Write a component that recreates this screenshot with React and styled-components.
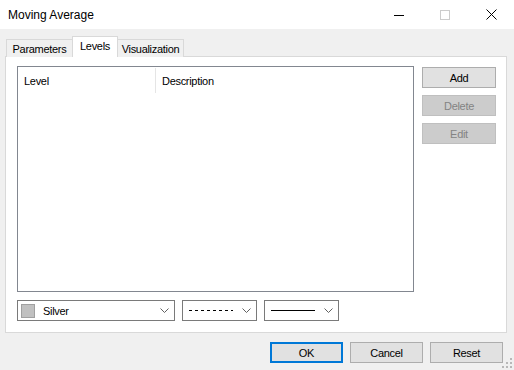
import React from "react";
import styled, { createGlobalStyle, css } from "styled-components";

const GlobalStyle = createGlobalStyle`
  html, body {
    margin: 0;
    padding: 0;
    background: #f0f0f0;
  }
  body {
    font-family: "Segoe UI", Tahoma, "Liberation Sans", Arial, sans-serif;
    font-size: 11px;
    letter-spacing: -0.3px;
    color: #000;
  }
`;

// Window frame
const Window = styled.div`
  position: relative;
  width: 514px;
  height: 370px;
  display: flex;
  flex-direction: column;
  background: #f0f0f0;
  overflow: hidden;
`;

const TitleBar = styled.div`
  height: 29px;
  display: flex;
  align-items: center;
  background: #fff;
  flex-shrink: 0;
`;

const Title = styled.div`
  flex: 1;
  padding-left: 8px;
  font-size: 12px;
  letter-spacing: 0;
  color: #000;
`;

const CaptionButton = styled.div`
  width: 46px;
  height: 29px;
  display: flex;
  align-items: center;
  justify-content: center;
`;

const Body = styled.div`
  flex: 1;
  display: flex;
  flex-direction: column;
  padding: 7px 7px 0 5px;
`;

// Tabs
const TabStrip = styled.div`
  display: flex;
  align-items: flex-end;
  height: 21px;
  padding-left: 2px;
  position: relative;
  z-index: 1;
  margin-bottom: -1px;
`;

const Tab = styled.div`
  width: ${({ $width }) => $width}px;
  height: 18px;
  display: flex;
  align-items: center;
  justify-content: center;
  border: 1px solid #d9d9d9;
  border-bottom: none;
  background: #f0f0f0;
  margin-left: -1px;
  box-sizing: border-box;
  ${({ $active }) =>
    $active &&
    css`
      height: 21px;
      background: #fff;
      padding-bottom: 3px;
      position: relative;
      z-index: 2;
    `}
`;

const Panel = styled.div`
  height: 277px;
  box-sizing: border-box;
  border: 1px solid #d9d9d9;
  background: #fff;
  padding: 9px 11px 0 11px;
  display: flex;
  flex-direction: column;
`;

const TopRow = styled.div`
  display: flex;
  gap: 8px;
`;

const ListBox = styled.div`
  width: 398px;
  height: 226px;
  box-sizing: border-box;
  border: 1px solid #828790;
  background: #fff;
`;

const HeaderRow = styled.div`
  display: flex;
  height: 25px;
  margin-top: 1px;
`;

const HeaderCell = styled.div`
  width: ${({ $width }) => $width}px;
  box-sizing: border-box;
  padding-left: 6px;
  display: flex;
  align-items: center;
  border-right: 1px solid ${({ $divider }) => ($divider ? "#e5e5e5" : "transparent")};
`;

const ButtonColumn = styled.div`
  display: flex;
  flex-direction: column;
  gap: 7px;
  padding-top: 1px;
`;

const Button = styled.button`
  width: ${({ $width }) => $width || 74}px;
  height: 21px;
  box-sizing: border-box;
  font-family: inherit;
  font-size: 11px;
  letter-spacing: inherit;
  color: #000;
  background: #e1e1e1;
  border: 1px solid #adadad;
  padding: 0;
  margin: 0;
  ${({ disabled }) =>
    disabled &&
    css`
      background: #cccccc;
      border-color: #bfbfbf;
      color: #838383;
    `}
  ${({ $default }) =>
    $default &&
    css`
      border: 2px solid #0078d7;
    `}
`;

// Combo boxes
const ComboRow = styled.div`
  display: flex;
  gap: 7px;
  margin-top: 8px;
`;

const Combo = styled.div`
  width: ${({ $width }) => $width}px;
  height: 21px;
  box-sizing: border-box;
  border: 1px solid #7a7a7a;
  background: #fff;
  display: flex;
  align-items: center;
  padding: 0 5px 0 3px;
`;

const ComboValue = styled.div`
  flex: 1;
  display: flex;
  align-items: center;
  gap: 8px;
`;

const Swatch = styled.div`
  width: 14px;
  height: 14px;
  box-sizing: border-box;
  background: #c0c0c0;
  border: 1px solid #a0a0a0;
`;

const LineSample = styled.div`
  width: 44px;
  margin-left: 3px;
  border-top: 1px ${({ $style }) => $style} #000;
  ${({ $style }) =>
    $style === "dashed" &&
    css`
      border-top: none;
      height: 1px;
      background: repeating-linear-gradient(to right, #000 0 3px, transparent 3px 6px);
    `}
`;

const Footer = styled.div`
  display: flex;
  justify-content: flex-end;
  gap: 7px;
  padding: 9px 4px 0 0;
`;

const Grip = styled.svg`
  position: absolute;
  right: 2px;
  bottom: 2px;
`;

const Chevron = () => (
  <svg width="9" height="5" viewBox="0 0 9 5">
    <path d="M0.5 0.5 L4.5 4.5 L8.5 0.5" fill="none" stroke="#606060" strokeWidth="1" />
  </svg>
);

const App = () => (
  <>
    <GlobalStyle />
    <Window>
      <TitleBar>
        <Title>Moving Average</Title>
        <CaptionButton>
          <svg width="10" height="10" viewBox="0 0 10 10">
            <path d="M0 5.5 H10" stroke="#000" strokeWidth="1" />
          </svg>
        </CaptionButton>
        <CaptionButton>
          <svg width="10" height="10" viewBox="0 0 10 10">
            <rect x="0.5" y="0.5" width="9" height="9" fill="none" stroke="#cccccc" strokeWidth="1" />
          </svg>
        </CaptionButton>
        <CaptionButton>
          <svg width="11" height="11" viewBox="0 0 11 11">
            <path d="M0.5 0.5 L10.5 10.5 M10.5 0.5 L0.5 10.5" stroke="#000" strokeWidth="1" />
          </svg>
        </CaptionButton>
      </TitleBar>
      <Body>
        <TabStrip>
          <Tab $width={67}>Parameters</Tab>
          <Tab $width={46} $active>Levels</Tab>
          <Tab $width={67}>Visualization</Tab>
        </TabStrip>
        <Panel>
          <TopRow>
            <ListBox>
              <HeaderRow>
                <HeaderCell $width={138} $divider>Level</HeaderCell>
                <HeaderCell $width={257}>Description</HeaderCell>
              </HeaderRow>
            </ListBox>
            <ButtonColumn>
              <Button>Add</Button>
              <Button disabled>Delete</Button>
              <Button disabled>Edit</Button>
            </ButtonColumn>
          </TopRow>
          <ComboRow>
            <Combo $width={158}>
              <ComboValue>
                <Swatch />
                <span>Silver</span>
              </ComboValue>
              <Chevron />
            </Combo>
            <Combo $width={75}>
              <ComboValue>
                <LineSample $style="dashed" />
              </ComboValue>
              <Chevron />
            </Combo>
            <Combo $width={75}>
              <ComboValue>
                <LineSample $style="solid" />
              </ComboValue>
              <Chevron />
            </Combo>
          </ComboRow>
        </Panel>
        <Footer>
          <Button $width={73} $default>OK</Button>
          <Button $width={73}>Cancel</Button>
          <Button $width={73}>Reset</Button>
        </Footer>
      </Body>
      <Grip width="10" height="10" viewBox="0 0 10 10">
        <g fill="#b8b8b8">
          <rect x="8" y="0" width="2" height="2" />
          <rect x="4" y="4" width="2" height="2" />
          <rect x="8" y="4" width="2" height="2" />
          <rect x="0" y="8" width="2" height="2" />
          <rect x="4" y="8" width="2" height="2" />
          <rect x="8" y="8" width="2" height="2" />
        </g>
      </Grip>
    </Window>
  </>
);

export default App;
